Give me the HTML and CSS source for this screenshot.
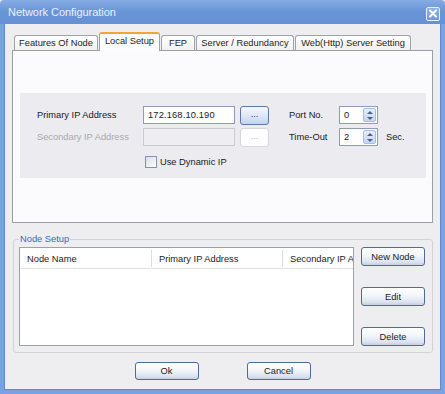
FILE: index.html
```html
<!DOCTYPE html>
<html>
<head>
<meta charset="utf-8">
<title>Network Configuration</title>
<link rel="stylesheet" href="styles.css">
</head>
<body>
<div class="window">
  <div class="titlebar">
    <span class="title">Network Configuration</span>
    <span class="close"><svg width="13" height="13" viewBox="0 0 13 13"><path d="M3.3 3.3 L9.7 9.7 M9.7 3.3 L3.3 9.7" stroke="#fff" stroke-width="2.2" stroke-linecap="round"/></svg></span>
  </div>
  <div class="frame">
    <div class="client">
      <div class="tabs">
        <div class="tab t1">Features Of Node</div>
        <div class="tab t2 active">Local Setup</div>
        <div class="tab t3">FEP</div>
        <div class="tab t4">Server / Redundancy</div>
        <div class="tab t5">Web(Http) Server Setting</div>
      </div>
      <div class="panel">
        <div class="local">
          <div class="lbl">Primary IP Address</div>
          <div class="edit">172.168.10.190</div>
          <div class="btn dots">...</div>
          <div class="lbl">Port No.</div>
          <div class="spin"><span class="val">0</span><span class="arrows"><span class="up"></span><span class="down"></span></span></div>
          <div></div>

          <div class="lbl disabled">Secondary IP Address</div>
          <div class="edit off"></div>
          <div class="btn dots off">...</div>
          <div class="lbl">Time-Out</div>
          <div class="spin"><span class="val">2</span><span class="arrows"><span class="up"></span><span class="down"></span></span></div>
          <div class="lbl">Sec.</div>

          <div></div>
          <label class="check"><span class="box"></span>Use Dynamic IP</label>
        </div>
      </div>
      <fieldset class="nodes">
        <legend>Node Setup</legend>
        <div class="list">
          <div class="head">
            <div class="col c1">Node Name</div>
            <div class="col c2">Primary IP Address</div>
            <div class="col c3">Secondary IP Address</div>
          </div>
        </div>
        <div class="side">
          <div class="btn">New Node</div>
          <div class="btn">Edit</div>
          <div class="btn">Delete</div>
        </div>
      </fieldset>
      <div class="footer">
        <div class="btn">Ok</div>
        <div class="btn">Cancel</div>
      </div>
    </div>
  </div>
</div>
</body>
</html>
```
FILE: styles.css
```css
* { box-sizing: border-box; }
html, body { margin: 0; padding: 0; }
body {
  width: 445px;
  height: 394px;
  overflow: hidden;
  font-family: "Liberation Sans", Arial, sans-serif;
  font-size: 9.3px;
  color: #1a1a1a;
  background: #eeedf0;
}
.window {
  width: 445px;
  height: 394px;
  display: flex;
  flex-direction: column;
}
.titlebar {
  height: 24px;
  flex: none;
  display: flex;
  align-items: center;
  justify-content: space-between;
  padding: 0 5px 0 8px;
  background: linear-gradient(#86ace4, #6a96d8 45%, #6591d5);
  border-radius: 4px 4px 0 0;
}
.title {
  color: #eaf0fb;
  font-size: 11px;
  letter-spacing: -0.05px;
}
.close {
  width: 14px;
  height: 14px;
  margin-top: 3px;
  border: 1px solid #e8f0fc;
  border-radius: 2px;
  background: linear-gradient(#8fb4ec, #6c9ade);
  display: flex;
  align-items: center;
  justify-content: center;
}
.frame {
  flex: 1;
  display: flex;
  border: 4px solid #7aa1e0;
  border-top: none;
  box-shadow: inset 1px 0 0 #5f8ad0, inset -1px 0 0 #5f8ad0, inset 0 -1px 0 #5f8ad0;
  padding: 0 1px 1px 1px;
}
.client {
  flex: 1;
  background: #eeedf0;
  padding-top: 8px;
  display: flex;
  flex-direction: column;
}
/* tabs */
.tabs {
  display: flex;
  align-items: flex-end;
  height: 18px;
  padding-left: 9px;
  gap: 1px;
}
.tab {
  height: 15px;
  border: 1px solid #9ba3ad;
  border-bottom: none;
  border-radius: 3px 3px 0 0;
  background: linear-gradient(#ffffff, #f2f1ee);
  text-align: center;
  line-height: 14px;
  white-space: nowrap;
  color: #1d1d1d;
}
.t1 { width: 84px; }
.t2 { width: 61px; }
.t3 { width: 34px; }
.t4 { width: 98px; }
.t5 { width: 116px; }
.tab.active {
  height: 19px;
  margin-bottom: -1px;
  position: relative;
  background: #fcfcfe;
  border-top: 2px solid #f0a53c;
  line-height: 15px;
}
.panel {
  margin-left: 7px;
  width: 421px;
  height: 173px;
  flex: none;
  border: 1px solid #97a0aa;
  background: #fbfbfd;
  padding: 42px 6px 0 7px;
}
.local {
  height: 85px;
  background: #ecebef;
  display: grid;
  grid-template-columns: 106px 97px 49px 50px 47px 1fr;
  grid-template-rows: 20px 20px 25px;
  row-gap: 2px;
  padding: 12px 0 0 17px;
  align-items: center;
}
.lbl { white-space: nowrap; }
.lbl.disabled { color: #a9a9ae; }
.edit {
  width: 92px;
  height: 18px;
  border: 1px solid #8c9db5;
  background: #fff;
  padding-left: 4px;
  line-height: 16px;
  letter-spacing: 0.15px;
}
.edit.off {
  background: #eeedf0;
  border-color: #c9cbd2;
}
.btn {
  height: 19px;
  border: 1px solid #4f6b9c;
  border-radius: 3px;
  background: linear-gradient(#ffffff, #f3f5fa 45%, #dae1ee 85%, #c5cfe2);
  display: flex;
  align-items: center;
  justify-content: center;
  white-space: nowrap;
  color: #1b1b1b;
}
.dots {
  width: 29px;
  background: linear-gradient(#f4f7fd, #dbe4f4 60%, #c5d3ec);
  border-color: #5c78a8;
  padding-bottom: 2px;
  color: #30405e;
}
.dots.off {
  background: #fdfdfd;
  border-color: #d7d8de;
  color: #b8b8be;
}
.spin {
  width: 39px;
  height: 18px;
  border: 1px solid #8c9db5;
  background: #fff;
  display: flex;
  align-items: stretch;
  justify-content: space-between;
}
.val { padding-left: 4px; line-height: 16px; }
.arrows {
  width: 13px;
  margin: 1px;
  display: flex;
  flex-direction: column;
  border: 1px solid #a9bde3;
  border-radius: 2px;
  background: linear-gradient(#e6eefc, #c4d4f2);
}
.arrows span {
  flex: 1;
  display: flex;
  align-items: center;
  justify-content: center;
}
.arrows .up::before {
  content: "";
  border-left: 3px solid transparent;
  border-right: 3px solid transparent;
  border-bottom: 3px solid #4d6185;
}
.arrows .down::before {
  content: "";
  border-left: 3px solid transparent;
  border-right: 3px solid transparent;
  border-top: 3px solid #4d6185;
}
.check {
  grid-column: 2 / span 3;
  display: flex;
  align-items: center;
  gap: 3px;
  padding-left: 2px;
  white-space: nowrap;
}
.box {
  width: 12px;
  height: 12px;
  border: 1px solid #8093b4;
  background: linear-gradient(135deg, #dcdde0, #ffffff);
}
/* node setup */
.nodes {
  margin: 10px 0 0 8px;
  width: 420px;
  min-width: 0;
  border: 1px solid #d3d2d8;
  border-radius: 3px;
  padding: 2px 7px 6px 5px;
  display: flex;
  gap: 7px;
}
.nodes legend {
  color: #3b68bf;
  padding: 0 1px;
  margin-left: 0;
  line-height: 12px;
  font-size: 9.3px;
}
.list {
  width: 335px;
  height: 99px;
  border: 1px solid #9aa2ab;
  background: #fff;
  overflow: hidden;
}
.head {
  display: flex;
  height: 21px;
  border-bottom: 1px solid #e4e4e8;
}
.col {
  white-space: nowrap;
  overflow: hidden;
  display: flex;
  align-items: center;
  padding-left: 7px;
  border-right: 1px solid #dcdce0;
  margin: 2px 0 1px;
}
.c1 { width: 132px; }
.c2 { width: 131px; }
.c3 { flex: 1; min-width: 0; border-right: none; }
.side {
  width: 64px;
  height: 99px;
  display: flex;
  flex-direction: column;
  justify-content: space-between;
}
.footer {
  margin-top: 9px;
  display: flex;
  justify-content: center;
  gap: 48px;
}
.footer .btn { width: 64px; height: 18px; }
```
